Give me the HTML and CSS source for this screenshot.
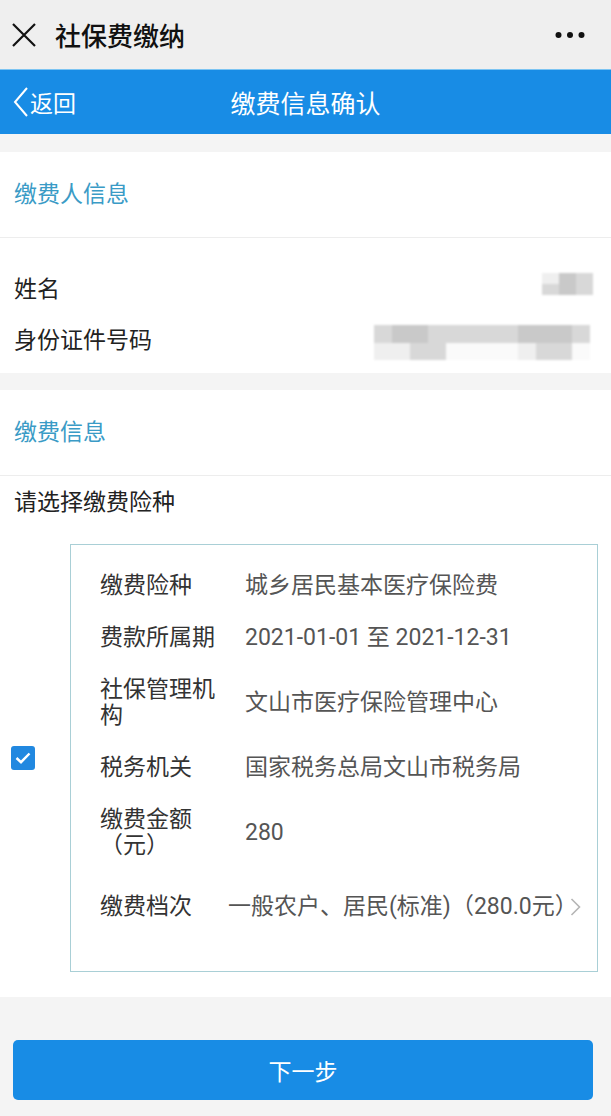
FILE: index.html
```html
<!DOCTYPE html>
<html lang="zh-CN">
  <head>
    <meta charset="UTF-8" />
    <meta name="viewport" content="width=device-width, initial-scale=1.0" />
    <title>社保费缴纳</title>
    <link rel="stylesheet" href="styles.css">
  </head>
  <body>
    <!-- App title bar -->
    <header class="topbar">
      <svg class="close-icon" width="26" height="26" viewBox="0 0 26 26">
        <path d="M2 2 L24 24 M24 2 L2 24" stroke="#111" stroke-width="2.2" fill="none" />
      </svg>
      <h1 class="topbar-title">社保费缴纳</h1>
      <svg class="more-icon" width="30" height="8" viewBox="0 0 30 8">
        <circle cx="3.5" cy="4" r="3" fill="#111" />
        <circle cx="15" cy="4" r="3" fill="#111" />
        <circle cx="26.5" cy="4" r="3" fill="#111" />
      </svg>
    </header>

    <!-- Page nav -->
    <nav class="navbar">
      <a class="back">
        <svg width="16" height="30" viewBox="0 0 16 30">
          <path d="M14 1 L2 15 L14 29" stroke="#fff" stroke-width="2" fill="none" />
        </svg>
        <span>返回</span>
      </a>
      <div class="navbar-title">缴费信息确认</div>
    </nav>

    <main>
      <!-- Payer info -->
      <section class="panel">
        <h2 class="panel-title">缴费人信息</h2>
        <div class="info-list">
          <div class="info-row">
            <span>姓名</span>
            <div class="masked masked-name">
              <i class="l"></i><i class="d"></i><i class="m"></i>
              <i class="m"></i><i class="d"></i><i class="m"></i>
            </div>
          </div>
          <div class="info-row">
            <span>身份证件号码</span>
            <div class="masked masked-id">
              <i class="m"></i><i class="d"></i><i class="d"></i><i class="m"></i><i class="m"></i><i class="m"></i><i class="m"></i><i class="m"></i><i class="d"></i><i class="d"></i><i class="d"></i><i class="m"></i>
              <i class="l"></i><i class="l"></i><i class="m"></i><i class="m"></i><i class="w"></i><i class="w"></i><i class="w"></i><i class="w"></i><i class="l"></i><i class="m"></i><i class="m"></i><i class="w"></i>
            </div>
          </div>
        </div>
      </section>

      <!-- Payment info -->
      <section class="panel panel-pay">
        <h2 class="panel-title">缴费信息</h2>
        <div class="pick-label">请选择缴费险种</div>

        <div class="choice">
          <span class="checkbox">
            <svg width="16" height="12" viewBox="0 0 16 12">
              <path d="M1.5 6 L6 10.2 L14.5 1.5" stroke="#fff" stroke-width="2.4" fill="none" />
            </svg>
          </span>
          <div class="card">
            <div class="card-row">
              <span class="card-label">缴费险种</span>
              <span class="card-value">城乡居民基本医疗保险费</span>
            </div>
            <div class="card-row">
              <span class="card-label">费款所属期</span>
              <span class="card-value">2021-01-01 至 2021-12-31</span>
            </div>
            <div class="card-row">
              <span class="card-label">社保管理机构</span>
              <span class="card-value">文山市医疗保险管理中心</span>
            </div>
            <div class="card-row">
              <span class="card-label">税务机关</span>
              <span class="card-value">国家税务总局文山市税务局</span>
            </div>
            <div class="card-row">
              <span class="card-label">缴费金额（元）</span>
              <span class="card-value">280</span>
            </div>
            <div class="card-row card-row-select">
              <span class="card-label">缴费档次</span>
              <div class="select">
                <span class="select-text">一般农户、居民(标准)（280.0元）</span>
                <svg class="chevron" width="11" height="18" viewBox="0 0 11 18">
                  <path d="M1.5 1 L9.5 9 L1.5 17" stroke="#b5b5b5" stroke-width="1.6" fill="none" />
                </svg>
              </div>
            </div>
          </div>
        </div>
      </section>

      <div class="actions">
        <button class="btn-next">下一步</button>
      </div>
    </main>
  </body>
</html>
```

FILE: styles.css
```css
* {
  margin: 0;
  padding: 0;
  box-sizing: border-box;
}

html,
body {
  width: 100%;
  min-height: 100%;
}

body {
  background-color: #f4f4f4;
  font-family: Roboto, "Noto Sans CJK SC", sans-serif;
  color: #222;
}

/* Title bar */
.topbar {
  height: 69px;
  background-color: #efefef;
  display: flex;
  align-items: center;
  padding: 0 26px 0 11px;
}
.close-icon {
  flex: none;
}
.topbar-title {
  font-size: 26px;
  font-weight: 500;
  color: #111;
  margin-left: 18px;
  flex: 1;
}
.more-icon {
  flex: none;
}

/* Nav bar */
.navbar {
  height: 65px;
  background-color: #188ce5;
  border-top: 1px solid #7cc4f2;
  display: flex;
  align-items: center;
  position: relative;
  color: #fff;
}
.back {
  display: flex;
  align-items: center;
  padding-left: 13px;
  font-size: 23px;
  gap: 1px;
  position: relative;
  z-index: 1;
}
.navbar-title {
  position: absolute;
  left: 0;
  right: 0;
  text-align: center;
  font-size: 25px;
}

/* Panels */
.panel {
  background-color: #fff;
  margin-top: 18px;
}
.panel-pay {
  margin-top: 17px;
  padding-bottom: 25px;
}
.panel-title {
  height: 86px;
  display: flex;
  align-items: center;
  padding: 0 0 5px 14px;
  font-size: 23px;
  font-weight: 400;
  color: #3a9bc6;
  border-bottom: 1px solid #ededed;
}

.info-list {
  padding: 23px 0 10px;
}
.info-row {
  height: 51px;
  display: flex;
  align-items: center;
  justify-content: space-between;
  padding-left: 14px;
  font-size: 23px;
}

/* Pixelated masks */
.masked {
  display: grid;
  filter: blur(1px);
}
.masked i {
  display: block;
  background-color: #e2e2e2;
}
.masked i.d {
  background-color: #c9c9c9;
}
.masked i.m {
  background-color: #d8d8d8;
}
.masked i.l {
  background-color: #efefef;
}
.masked i.w {
  background-color: #fafafa;
}
.masked-name {
  grid-template-columns: repeat(3, 17px);
  grid-template-rows: 11px 11px;
  margin-right: 18px;
  margin-top: -6px;
}
.masked-id {
  grid-template-columns: repeat(12, 18px);
  grid-template-rows: 18px 17px;
  margin-right: 21px;
  margin-top: 10px;
}

.pick-label {
  height: 48px;
  display: flex;
  align-items: center;
  padding-left: 14px;
  font-size: 23px;
}

/* Insurance choice */
.choice {
  display: flex;
  align-items: center;
  margin-top: 20px;
  padding: 0 13px 0 11px;
}
.checkbox {
  flex: none;
  width: 24px;
  height: 24px;
  border-radius: 3px;
  background-color: #2188e0;
  display: flex;
  align-items: center;
  justify-content: center;
}
.card {
  flex: 1;
  margin-left: 35px;
  border: 1px solid #a9cfd6;
  padding: 28px 0 51px 29px;
  display: flex;
  flex-direction: column;
  gap: 26px;
}
.card-row {
  display: flex;
  align-items: center;
  font-size: 23px;
  line-height: 26px;
}
.card-label {
  flex: none;
  width: 120px;
  color: #333;
}
.card-value {
  margin-left: 25px;
  color: #555;
}
.card-row-select {
  margin-top: 9px;
}
.select {
  display: flex;
  align-items: center;
  margin-left: 8px;
  width: 353px;
}
.select-text {
  width: 337px;
  overflow: hidden;
  white-space: nowrap;
  color: #555;
}
.chevron {
  flex: none;
  margin-left: 5px;
}

/* Footer action */
.actions {
  padding: 43px 18px 0 13px;
}
.btn-next {
  width: 100%;
  height: 60px;
  border: none;
  border-radius: 5px;
  background-color: #188ce5;
  color: #fff;
  font-family: Roboto, "Noto Sans CJK SC", sans-serif;
  font-size: 23px;
}
```
